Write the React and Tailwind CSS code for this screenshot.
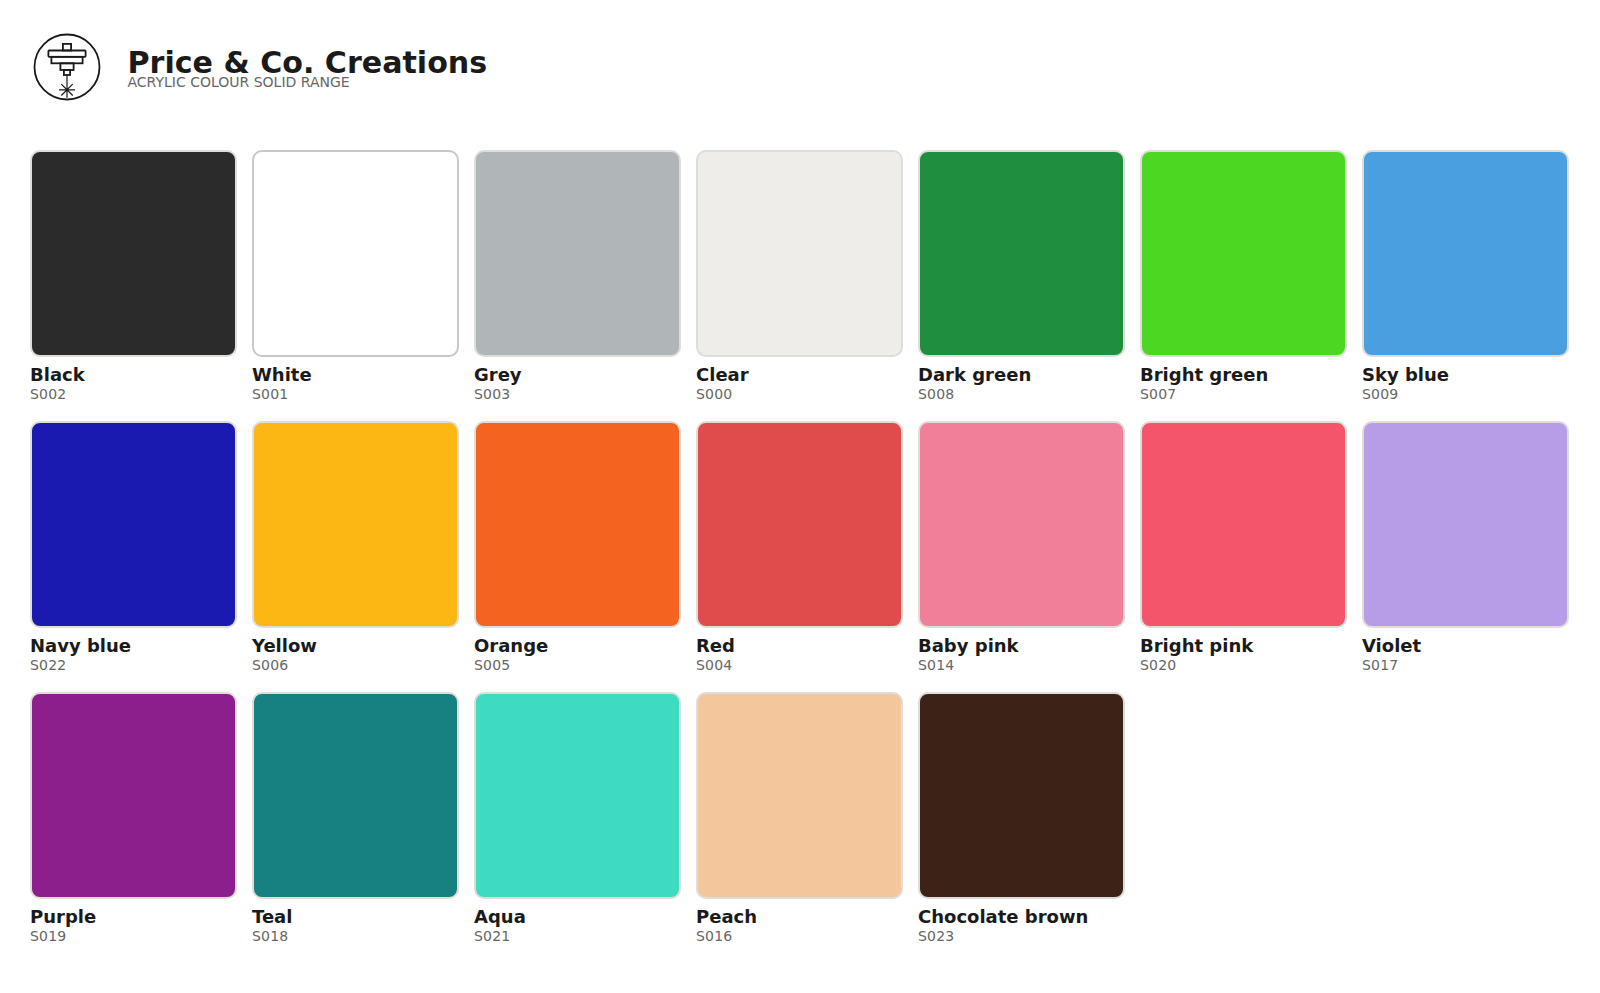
const colours = [
  { name: 'Black', code: 'S002', bg: 'bg-[#2b2b2b] border-[#e0ddd8]' },
  { name: 'White', code: 'S001', bg: 'bg-white border-[#c8c8c8]' },
  { name: 'Grey', code: 'S003', bg: 'bg-[#b0b5b7] border-[#e0ddd8]' },
  { name: 'Clear', code: 'S000', bg: 'bg-[#eeede9] border-[#e0ddd8]' },
  { name: 'Dark green', code: 'S008', bg: 'bg-[#1f8f3f] border-[#e0ddd8]' },
  { name: 'Bright green', code: 'S007', bg: 'bg-[#4cd722] border-[#e0ddd8]' },
  { name: 'Sky blue', code: 'S009', bg: 'bg-[#4a9fe0] border-[#e0ddd8]' },
  { name: 'Navy blue', code: 'S022', bg: 'bg-[#1a1ab0] border-[#e0ddd8]' },
  { name: 'Yellow', code: 'S006', bg: 'bg-[#fdb714] border-[#e0ddd8]' },
  { name: 'Orange', code: 'S005', bg: 'bg-[#f4631f] border-[#e0ddd8]' },
  { name: 'Red', code: 'S004', bg: 'bg-[#e04b4b] border-[#e0ddd8]' },
  { name: 'Baby pink', code: 'S014', bg: 'bg-[#f27f99] border-[#e0ddd8]' },
  { name: 'Bright pink', code: 'S020', bg: 'bg-[#f4556b] border-[#e0ddd8]' },
  { name: 'Violet', code: 'S017', bg: 'bg-[#b79ce8] border-[#e0ddd8]' },
  { name: 'Purple', code: 'S019', bg: 'bg-[#8c1f8c] border-[#e0ddd8]' },
  { name: 'Teal', code: 'S018', bg: 'bg-[#178080] border-[#e0ddd8]' },
  { name: 'Aqua', code: 'S021', bg: 'bg-[#3ddbc0] border-[#e0ddd8]' },
  { name: 'Peach', code: 'S016', bg: 'bg-[#f3c79b] border-[#e0ddd8]' },
  { name: 'Chocolate brown', code: 'S023', bg: 'bg-[#3d2317] border-[#e0ddd8]' },
]

function Logo() {
  return (
    <svg width="68" height="68" viewBox="0 0 68 68" fill="none" stroke="#1a1a1a" strokeWidth="1.8">
      <circle cx="34" cy="34" r="32.5" />
      <rect x="29.9" y="10.9" width="8.2" height="6.6" />
      <rect x="15.4" y="17.5" width="37.2" height="6.3" rx="0.8" />
      <rect x="18.4" y="23.8" width="31.2" height="6.5" />
      <rect x="27.4" y="30.3" width="13.2" height="6.7" />
      <rect x="30.9" y="37" width="6.2" height="5" />
      <path d="M34 42v22.8M26 56.8h16M28.3 51.1l11.4 11.4M39.7 51.1l-11.4 11.4" strokeWidth="1.2" />
    </svg>
  )
}

export default function App() {
  return (
    <div className="min-h-screen bg-white pl-[30px] pt-[33px] font-['DejaVu_Sans',sans-serif] text-[#1a1a1a]">
      <header className="flex items-center gap-[27px] ml-[2.5px] mb-[49px]">
        <Logo />
        <div className="pt-[1px]">
          <h1 className="text-[30.1px] leading-[33px] font-bold">Price &amp; Co. Creations</h1>
          <p className="text-[14px] leading-[14px] -mt-[4px] text-[#666]">ACRYLIC COLOUR SOLID RANGE</p>
        </div>
      </header>

      <div className="grid grid-cols-[repeat(7,207px)] gap-x-[15px] gap-y-[18px]">
        {colours.map((c) => (
          <div key={c.code}>
            <div className={`h-[207px] rounded-[10px] border-2 ${c.bg}`} />
            <div className="mt-[7px] text-[18px] leading-[22px] font-bold">{c.name}</div>
            <div className="text-[14px] leading-[17px] tracking-[0.2px] text-[#666]">{c.code}</div>
          </div>
        ))}
      </div>
    </div>
  )
}
